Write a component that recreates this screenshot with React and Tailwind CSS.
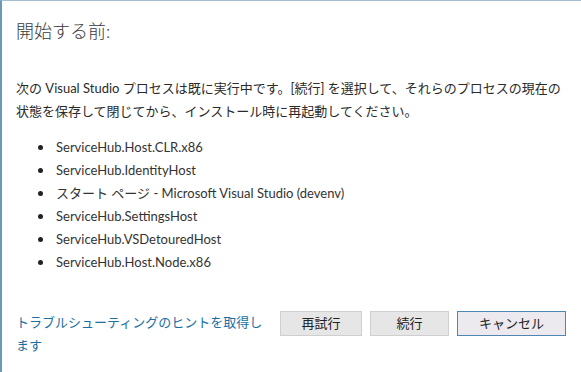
const processes = [
  'ServiceHub.Host.CLR.x86',
  'ServiceHub.IdentityHost',
  'スタート ページ - Microsoft Visual Studio (devenv)',
  'ServiceHub.SettingsHost',
  'ServiceHub.VSDetouredHost',
  'ServiceHub.Host.Node.x86',
];

export default function App() {
  return (
    <div className="h-[372px] w-full bg-white border-l-2 border-t border-l-[#6b98b8] border-t-[#a3c0d4] pl-[14px] pr-[15px] font-['Lato','Noto_Sans_CJK_JP',sans-serif] text-[13px] text-[#2a2a2a] flex flex-col">
      <h1 className="mt-[18px] text-[18px] leading-[24px] font-light text-[#3a3a3a]">開始する前:</h1>

      <p className="mt-[34px] leading-[23px]">
        次の Visual Studio プロセスは既に実行中です。[続行] を選択して、それらのプロセスの現在の状態を保存して閉じてから、インストール時に再起動してください。
      </p>

      <ul className="mt-[13px] flex flex-col">
        {processes.map((p) => (
          <li key={p} className="flex items-center leading-[23px] pl-[22px]">
            <span className="w-[5px] h-[5px] rounded-full bg-[#222] mr-[13px] shrink-0" />
            <span className="text-[#333]">{p}</span>
          </li>
        ))}
      </ul>

      <div className="mt-[37px] flex items-start justify-between">
        <a className="w-[252px] leading-[23px] text-[#1b6fa3] cursor-pointer">
          トラブルシューティングのヒントを取得します
        </a>
        <div className="flex gap-2">
          <button className="w-[82px] h-[25px] bg-[#e6e6e6] border border-[#cfcfcf] text-[#222] leading-none">再試行</button>
          <button className="w-[79px] h-[25px] bg-[#e6e6e6] border border-[#cfcfcf] text-[#222] leading-none">続行</button>
          <button className="w-[109px] h-[25px] bg-[#eceaee] border border-[#4f86b3] text-[#222] leading-none">キャンセル</button>
        </div>
      </div>
    </div>
  );
}
